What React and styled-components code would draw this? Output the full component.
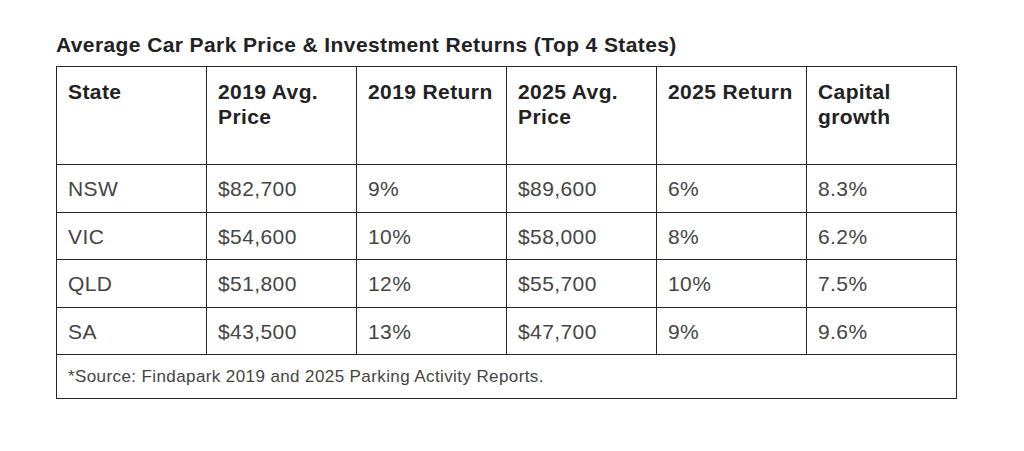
import styled, { createGlobalStyle } from 'styled-components';

const GlobalStyle = createGlobalStyle`
  html, body {
    margin: 0;
    padding: 0;
    background: #ffffff;
  }
  body {
    font-family: "Liberation Sans", Arial, sans-serif;
  }
`;

const Pagina = styled.div`
  padding: 32px 0 0 56px;
`;

const Titolo = styled.h2`
  margin: 0 0 9px 0;
  font-size: 21px;
  line-height: 25px;
  letter-spacing: 0.4px;
  font-weight: bold;
  color: #222222;
`;

const Tabella = styled.table`
  border-collapse: collapse;
  table-layout: fixed;
  width: 901px;
  color: #444444;
  font-size: 21px;
  line-height: 25px;
  letter-spacing: 0.4px;
`;

const Colonna = styled.col`
  width: 150px;
`;

const Intestazione = styled.th`
  border: 1px solid #262626;
  text-align: left;
  vertical-align: top;
  font-weight: bold;
  color: #222222;
  padding: 12px 11px 0 11px;
  height: 85px;
`;

const Cella = styled.td`
  border: 1px solid #262626;
  padding: 0 11px;
  height: ${(p) => p.$altezza || 46}px;
  vertical-align: middle;
  font-size: ${(p) => (p.$piccolo ? '17px' : '21px')};
`;

const righe = [
  ['NSW', '$82,700', '9%', '$89,600', '6%', '8.3%'],
  ['VIC', '$54,600', '10%', '$58,000', '8%', '6.2%'],
  ['QLD', '$51,800', '12%', '$55,700', '10%', '7.5%'],
  ['SA', '$43,500', '13%', '$47,700', '9%', '9.6%'],
];

const intestazioni = [
  ['State'],
  ['2019 Avg.', 'Price'],
  ['2019 Return'],
  ['2025 Avg.', 'Price'],
  ['2025 Return'],
  ['Capital', 'growth'],
];

const App = () => {
  return (
    <Pagina>
      <GlobalStyle />
      <Titolo>Average Car Park Price &amp; Investment Returns (Top 4 States)</Titolo>
      <Tabella>
        <colgroup>
          {intestazioni.map((_, i) => (
            <Colonna key={i} />
          ))}
        </colgroup>
        <thead>
          <tr>
            {intestazioni.map((righeTesto, i) => (
              <Intestazione key={i}>
                {righeTesto.map((t, j) => (
                  <div key={j}>{t}</div>
                ))}
              </Intestazione>
            ))}
          </tr>
        </thead>
        <tbody>
          {righe.map((riga, r) => (
            <tr key={riga[0]}>
              {riga.map((valore, i) => (
                <Cella key={i} $altezza={r % 2 === 0 ? 47 : 46}>{valore}</Cella>
              ))}
            </tr>
          ))}
          <tr>
            <Cella colSpan={6} $piccolo $altezza={43}>
              *Source: Findapark 2019 and 2025 Parking Activity Reports.
            </Cella>
          </tr>
        </tbody>
      </Tabella>
    </Pagina>
  );
};

export default App;
